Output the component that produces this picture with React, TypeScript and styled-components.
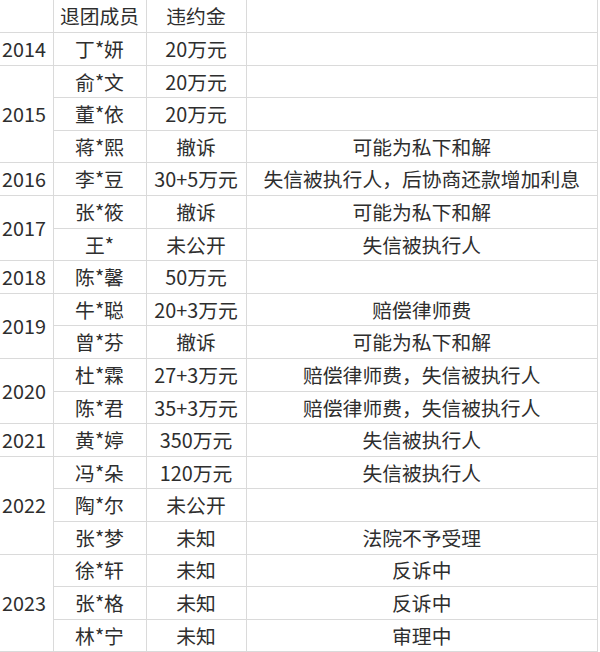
import { createGlobalStyle, styled } from "styled-components";

const GlobalStyle = createGlobalStyle`
    html, body {
        margin: 0;
        padding: 0;
        background: #ffffff;
    }
    body {
        font-family: "Noto Sans CJK SC", "Noto Sans", sans-serif;
        color: #2e2e2e;
    }
`;

const Sheet = styled.table`
    width: 598px;
    height: 652px;
    border-collapse: collapse;
    table-layout: fixed;
    font-size: 19.8px;
    line-height: 1;
`;

const Row = styled.tr`
    height: 32.6px;
`;

const Cell = styled.td<{ $first?: boolean }>`
    padding: 0;
    text-align: center;
    vertical-align: middle;
    white-space: nowrap;
    border-right: 1px solid #dadada;
    border-bottom: 1px solid #dadada;
    border-left: ${(p) => (p.$first ? "none" : "1px solid #dadada")};
`;

const YearCell = styled(Cell)`
    text-align: left;
    padding-left: 2px;
`;

type Entry = {
    name: string;
    fee: string;
    note?: string;
};

type YearGroup = {
    year: string;
    entries: Entry[];
};

const DATA: YearGroup[] = [
    { year: "2014", entries: [{ name: "丁*妍", fee: "20万元" }] },
    {
        year: "2015",
        entries: [
            { name: "俞*文", fee: "20万元" },
            { name: "董*依", fee: "20万元" },
            { name: "蒋*熙", fee: "撤诉", note: "可能为私下和解" },
        ],
    },
    {
        year: "2016",
        entries: [{ name: "李*豆", fee: "30+5万元", note: "失信被执行人，后协商还款增加利息" }],
    },
    {
        year: "2017",
        entries: [
            { name: "张*筱", fee: "撤诉", note: "可能为私下和解" },
            { name: "王*", fee: "未公开", note: "失信被执行人" },
        ],
    },
    { year: "2018", entries: [{ name: "陈*馨", fee: "50万元" }] },
    {
        year: "2019",
        entries: [
            { name: "牛*聪", fee: "20+3万元", note: "赔偿律师费" },
            { name: "曾*芬", fee: "撤诉", note: "可能为私下和解" },
        ],
    },
    {
        year: "2020",
        entries: [
            { name: "杜*霖", fee: "27+3万元", note: "赔偿律师费，失信被执行人" },
            { name: "陈*君", fee: "35+3万元", note: "赔偿律师费，失信被执行人" },
        ],
    },
    { year: "2021", entries: [{ name: "黄*婷", fee: "350万元", note: "失信被执行人" }] },
    {
        year: "2022",
        entries: [
            { name: "冯*朵", fee: "120万元", note: "失信被执行人" },
            { name: "陶*尔", fee: "未公开" },
            { name: "张*梦", fee: "未知", note: "法院不予受理" },
        ],
    },
    {
        year: "2023",
        entries: [
            { name: "徐*轩", fee: "未知", note: "反诉中" },
            { name: "张*格", fee: "未知", note: "反诉中" },
            { name: "林*宁", fee: "未知", note: "审理中" },
        ],
    },
];

export default function App() {
    return (
        <>
            <GlobalStyle />
            <Sheet>
                <colgroup>
                    <col style={{ width: 53 }} />
                    <col style={{ width: 93 }} />
                    <col style={{ width: 100 }} />
                    <col />
                </colgroup>
                <tbody>
                    <Row>
                        <Cell $first />
                        <Cell>退团成员</Cell>
                        <Cell>违约金</Cell>
                        <Cell />
                    </Row>
                    {DATA.map((group) =>
                        group.entries.map((entry, i) => (
                            <Row key={entry.name}>
                                {i === 0 && (
                                    <YearCell $first rowSpan={group.entries.length}>
                                        {group.year}
                                    </YearCell>
                                )}
                                <Cell>{entry.name}</Cell>
                                <Cell>{entry.fee}</Cell>
                                <Cell>{entry.note ?? ""}</Cell>
                            </Row>
                        ))
                    )}
                </tbody>
            </Sheet>
        </>
    );
}
